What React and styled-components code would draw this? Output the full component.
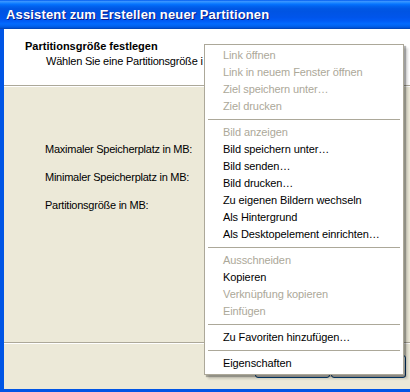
import React from "react";
import styled, { createGlobalStyle } from "styled-components";

const Global = createGlobalStyle`
  html, body {
    margin: 0;
    padding: 0;
    background: #ece9d8;
    overflow: hidden;
  }
  #root {
    width: 410px;
    height: 392px;
  }
`;

const Window = styled.div`
  position: relative;
  width: 410px;
  height: 392px;
  display: flex;
  flex-direction: column;
  background: #0055e5;
  font-family: "Liberation Sans", Arial, sans-serif;
  font-size: 11px;
  color: #000;
`;

const TitleBar = styled.div`
  height: 29px;
  display: flex;
  align-items: center;
  padding-left: 6px;
  background: linear-gradient(
    #0058ee 0%,
    #3a93ff 5%,
    #288eff 8%,
    #127dff 12%,
    #036ffc 16%,
    #0262ee 22%,
    #0057e5 30%,
    #0054e3 40%,
    #0055eb 60%,
    #005bf5 72%,
    #026afe 82%,
    #0062ef 90%,
    #0052d6 96%,
    #0040ab 100%
  );
`;

const Title = styled.span`
  font-family: "Liberation Sans", Arial, sans-serif;
  font-weight: bold;
  font-size: 13px;
  letter-spacing: 0.15px;
  color: #fff;
  text-shadow: 1px 1px 0 #0a1883;
`;

const Frame = styled.div`
  flex: 1;
  display: flex;
  flex-direction: column;
  margin: 0 0 3px 4px;
  background: #ece9d8;
`;

const Header = styled.div`
  height: 57px;
  background: #fff;
  border-bottom: 1px solid #aca899;
  padding: 10px 0 0 21px;
  box-sizing: border-box;
  letter-spacing: -0.2px;
`;

const HeaderTitle = styled.div`
  font-weight: bold;
  line-height: 15px;
  letter-spacing: 0;
`;

const HeaderText = styled.div`
  padding-left: 21px;
  line-height: 15px;
  white-space: nowrap;
`;

const Body = styled.div`
  flex: 1;
  border-top: 1px solid #fff;
  padding: 56px 0 0 41px;
  display: flex;
  flex-direction: column;
  gap: 15px;
`;

const Label = styled.div`
  line-height: 13px;
  letter-spacing: -0.25px;
`;

const Divider = styled.div`
  height: 1px;
  background: #aca899;
  border-bottom: 1px solid #fff;
`;

const ButtonRow = styled.div`
  height: 45px;
  display: flex;
  padding: 11px 0 0 251px;
  box-sizing: border-box;
  gap: 1px;
`;

const Button = styled.div`
  width: 75px;
  height: 23px;
  box-sizing: border-box;
  border: 1px solid #003c74;
  border-radius: 3px;
  background: linear-gradient(#fff, #f0f0ea 85%, #d6d0c5);
`;

const Menu = styled.div`
  position: absolute;
  left: 204px;
  top: 44px;
  width: 200px;
  box-sizing: border-box;
  padding: 2px 0;
  background: #fff;
  border: 1px solid #aca899;
  box-shadow: 2px 2px 1px rgba(0, 0, 0, 0.28), 4px 4px 2px rgba(0, 0, 0, 0.14);
`;

const Item = styled.div`
  height: 17px;
  line-height: 17px;
  padding-left: 18px;
  white-space: nowrap;
  letter-spacing: -0.1px;
  color: ${(p) => (p.disabled ? "#aca899" : "#000")};
`;

const Separator = styled.div`
  height: 1px;
  margin: 4px 3px 4px 3px;
  background: #aca899;
`;

const menu = [
  [
    ["Link öffnen", true],
    ["Link in neuem Fenster öffnen", true],
    ["Ziel speichern unter…", true],
    ["Ziel drucken", true],
  ],
  [
    ["Bild anzeigen", true],
    ["Bild speichern unter…"],
    ["Bild senden…"],
    ["Bild drucken…"],
    ["Zu eigenen Bildern wechseln"],
    ["Als Hintergrund"],
    ["Als Desktopelement einrichten…"],
  ],
  [
    ["Ausschneiden", true],
    ["Kopieren"],
    ["Verknüpfung kopieren", true],
    ["Einfügen", true],
  ],
  [["Zu Favoriten hinzufügen…"]],
  [["Eigenschaften"]],
];

export default function App() {
  return (
    <>
      <Global />
      <Window>
        <TitleBar>
          <Title>Assistent zum Erstellen neuer Partitionen</Title>
        </TitleBar>
        <Frame>
          <Header>
            <HeaderTitle>Partitionsgröße festlegen</HeaderTitle>
            <HeaderText>Wählen Sie eine Partitionsgröße i</HeaderText>
          </Header>
          <Body>
            <Label>Maximaler Speicherplatz in MB:</Label>
            <Label>Minimaler Speicherplatz in MB:</Label>
            <Label>Partitionsgröße in MB:</Label>
          </Body>
          <Divider />
          <ButtonRow>
            <Button />
            <Button />
          </ButtonRow>
        </Frame>
        <Menu>
          {menu.map((group, gi) => (
            <React.Fragment key={gi}>
              {gi > 0 && <Separator />}
              {group.map(([label, disabled]) => (
                <Item key={label} disabled={disabled}>
                  {label}
                </Item>
              ))}
            </React.Fragment>
          ))}
        </Menu>
      </Window>
    </>
  );
}
